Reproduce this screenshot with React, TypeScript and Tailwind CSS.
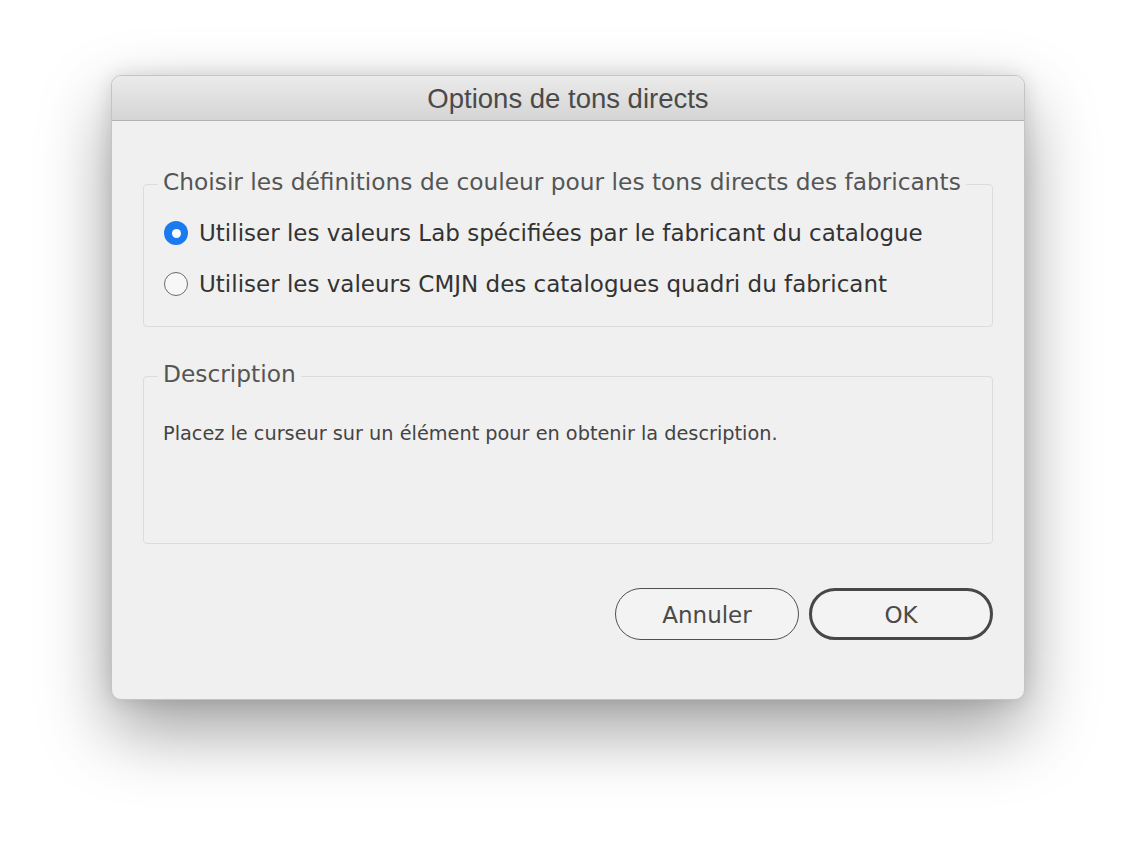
import React from 'react';

function Radio({ checked }: { checked?: boolean }) {
  if (checked) {
    return (
      <span className="flex h-[24px] w-[24px] shrink-0 items-center justify-center rounded-full bg-[#1a7bef]">
        <span className="h-[9px] w-[9px] rounded-full bg-white" />
      </span>
    );
  }
  return <span className="h-[24px] w-[24px] shrink-0 rounded-full border-[1.5px] border-[#6b6b6b] bg-[#f7f7f7]" />;
}

export default function App() {
  const [choice, setChoice] = React.useState(0);

  return (
    <div className="min-h-[848px] w-[1136px] bg-white pt-[75px] pl-[111px] font-['DejaVu_Sans',sans-serif]">
      <div className="w-[914px] overflow-hidden rounded-[10px] border border-[#c4c4c4] bg-[#f0f0f0] shadow-[0_30px_70px_rgba(0,0,0,0.38),0_0_20px_rgba(0,0,0,0.12)]">
        {/* title bar */}
        <div className="flex h-[45px] items-center justify-center border-b border-[#b4b4b4] bg-gradient-to-b from-[#ebebeb] to-[#d5d5d5] pt-[2px]">
          <span className="font-['Liberation_Sans',sans-serif] text-[27.5px] text-[#4a4a4a]">Options de tons directs</span>
        </div>

        <div className="px-[31px] pt-[63px] pb-[59px]">
          {/* group 1 */}
          <div className="relative h-[143px] rounded-[4px] border border-[#dcdcdc] pt-[36px] pl-[20px]">
            <div className="absolute left-[14px] top-[-18px] whitespace-nowrap bg-[#f0f0f0] px-[5px] text-[23.3px] leading-[30px] text-[#555]">
              Choisir les définitions de couleur pour les tons directs des fabricants
            </div>
            <div className="flex flex-col gap-[27px]">
              {[
                'Utiliser les valeurs Lab spécifiées par le fabricant du catalogue',
                'Utiliser les valeurs CMJN des catalogues quadri du fabricant',
              ].map((t, i) => (
                <button
                  key={i}
                  onClick={() => setChoice(i)}
                  className="flex h-[24px] items-center gap-[11px] whitespace-nowrap text-left text-[23px] text-[#333]"
                >
                  <Radio checked={choice === i} />
                  <span>{t}</span>
                </button>
              ))}
            </div>
          </div>

          {/* group 2 */}
          <div className="relative mt-[49px] h-[168px] rounded-[4px] border border-[#dcdcdc] pt-[43px] pl-[19px]">
            <div className="absolute left-[14px] top-[-18px] bg-[#f0f0f0] px-[5px] text-[23.3px] leading-[30px] text-[#555]">
              Description
            </div>
            <p className="whitespace-nowrap text-[19.3px] leading-[28px] text-[#444]">
              Placez le curseur sur un élément pour en obtenir la description.
            </p>
          </div>

          {/* buttons */}
          <div className="mt-[44px] flex justify-end gap-[10px]">
            <button className="h-[52px] w-[184px] rounded-full border-[1.5px] border-[#505050] bg-[#f3f3f3] pt-[2px] text-[23px] text-[#4a4a4a]">
              Annuler
            </button>
            <button className="h-[52px] w-[184px] rounded-full border-[3px] border-[#474747] bg-[#f3f3f3] pt-[2px] text-[23px] text-[#4a4a4a]">
              OK
            </button>
          </div>
        </div>
      </div>
    </div>
  );
}
